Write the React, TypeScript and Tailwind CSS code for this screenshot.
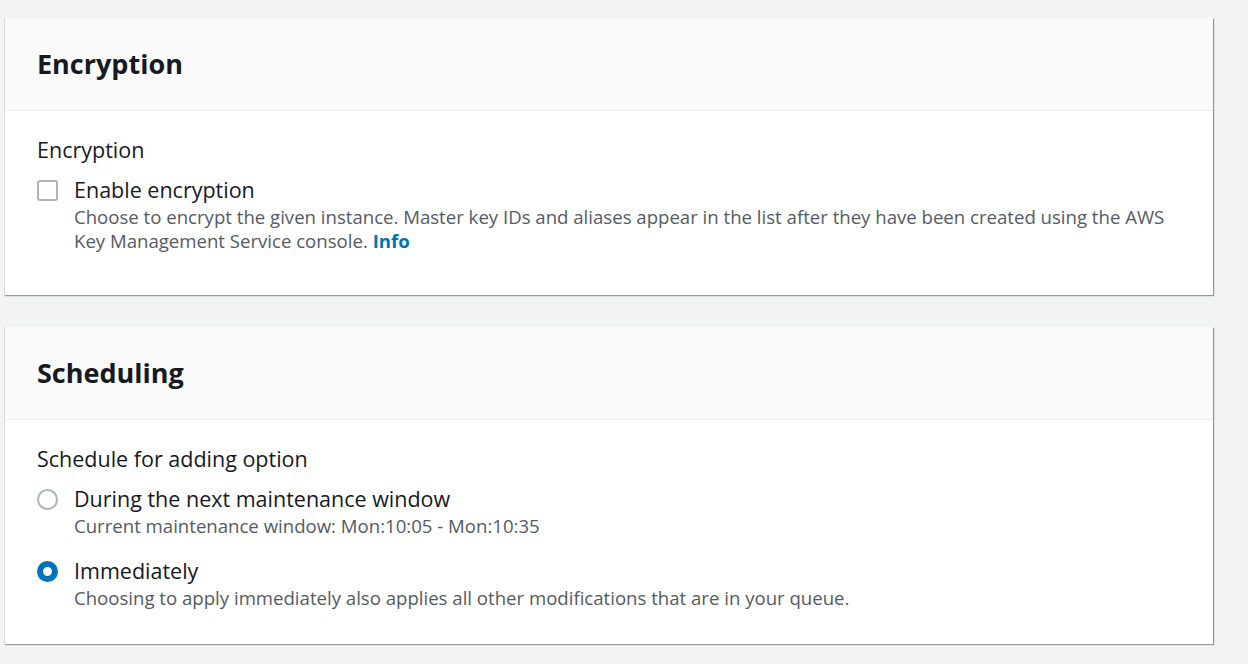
import { useState } from "react";

function Checkbox({ checked }: { checked: boolean }) {
  return (
    <span
      className={`mt-[5px] inline-block h-[21px] w-[21px] shrink-0 rounded-[3px] border-2 ${
        checked ? "border-[#0073bb] bg-[#0073bb]" : "border-[#aab7b8] bg-white"
      }`}
    />
  );
}

function Radio({ checked }: { checked: boolean }) {
  return checked ? (
    <span className="mt-[5px] inline-block h-[21px] w-[21px] shrink-0 rounded-full border-[6px] border-[#0073bb] bg-white" />
  ) : (
    <span className="mt-[5px] inline-block h-[21px] w-[21px] shrink-0 rounded-full border-2 border-[#aab7b8] bg-white" />
  );
}

function Card({ title, children }: { title: string; children: React.ReactNode }) {
  return (
    <section className="w-[1209px] border-l border-[#d5dbdb] bg-white shadow-[1px_1px_1px_0_rgba(0,28,36,0.3),1px_1px_1px_0_rgba(0,28,36,0.15)]">
      <div className="flex h-[93px] items-center border-b border-[#eaeded] bg-[#fafafa] pl-8">
        <h2 className="text-[27px] font-bold text-[#16191f]">{title}</h2>
      </div>
      {children}
    </section>
  );
}

export default function App() {
  const [encrypt, setEncrypt] = useState(false);
  const [schedule, setSchedule] = useState("immediately");

  return (
    <div
      className="flex h-[664px] flex-col gap-[32px] bg-[#f2f3f3] pl-[4px] pt-[18px] text-[#16191f]"
      style={{ fontFamily: '"Open Sans", "Noto Sans", sans-serif' }}
    >
      <Card title="Encryption">
        <div className="pb-[42px] pl-8 pr-[44px] pt-[24px]">
          <div className="text-[21.5px] leading-[30px]">Encryption</div>
          <label className="mt-[10px] flex cursor-pointer gap-4" onClick={() => setEncrypt(!encrypt)}>
            <Checkbox checked={encrypt} />
            <div>
              <div className="text-[21.5px] leading-[30px]">Enable encryption</div>
              <p className="text-[18.6px] leading-[24px] text-[#545b64]">
                Choose to encrypt the given instance. Master key IDs and aliases appear in the list after they have been
                created using the AWS Key Management Service console.{" "}
                <a href="#" className="font-bold text-[#0073bb]">
                  Info
                </a>
              </p>
            </div>
          </label>
        </div>
      </Card>

      <Card title="Scheduling">
        <div className="pb-[34px] pl-8 pr-[44px] pt-[24px]">
          <div className="text-[21.5px] leading-[30px]">Schedule for adding option</div>
          <div className="mt-[10px] flex flex-col gap-[18px]">
            <label className="flex cursor-pointer gap-4" onClick={() => setSchedule("window")}>
              <Radio checked={schedule === "window"} />
              <div>
                <div className="text-[21.5px] leading-[30px]">During the next maintenance window</div>
                <p className="text-[18.6px] leading-[24px] text-[#545b64]">
                  Current maintenance window: Mon:10:05 - Mon:10:35
                </p>
              </div>
            </label>
            <label className="flex cursor-pointer gap-4" onClick={() => setSchedule("immediately")}>
              <Radio checked={schedule === "immediately"} />
              <div>
                <div className="text-[21.5px] leading-[30px]">Immediately</div>
                <p className="text-[18.6px] leading-[24px] text-[#545b64]">
                  Choosing to apply immediately also applies all other modifications that are in your queue.
                </p>
              </div>
            </label>
          </div>
        </div>
      </Card>
    </div>
  );
}
